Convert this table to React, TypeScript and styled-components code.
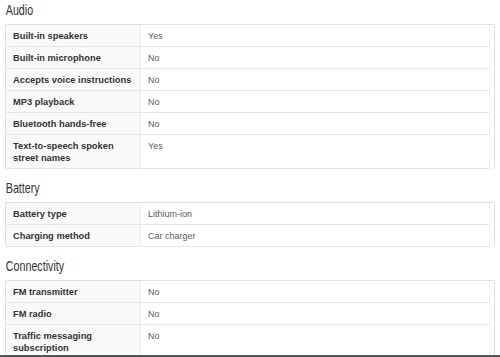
import styled, {createGlobalStyle} from "styled-components";

const GlobalStyle = createGlobalStyle`
  body {
    margin: 0;
    background: #ffffff;
    font-family: "Liberation Sans", Arial, sans-serif;
  }
`;

const Page = styled.div`
  height: 357px;
  box-sizing: border-box;
  overflow: hidden;
  padding: 0 5px;
  border-bottom: 2px solid #555555;
`;

const Section = styled.section`
  & + & {
    margin-top: 9px;
  }
`;

const Heading = styled.h2`
  margin: 0 0 4px;
  padding-left: 1px;
  height: 20px;
  font-family: "Liberation Sans", Arial, sans-serif;
  font-weight: normal;
  font-size: 14.5px;
  line-height: 20px;
  color: #333333;
  transform: scaleX(0.74);
  transform-origin: left center;
  white-space: nowrap;
`;

const Panel = styled.div`
  border: 1px solid #dedede;
  border-bottom: none;
  padding-right: 4px;
  border-radius: 2px;
`;

const Table = styled.table`
  width: 100%;
  border-collapse: collapse;
  border-right: 1px solid #f0f0f0;
`;

const Row = styled.tr`
  border-bottom: 1px solid #e6e6e6;
`;

const Label = styled.th`
  width: 120px;
  padding: 5px 7px 4px;
  background: #f9f9f9;
  border-right: 1px solid #ececec;
  text-align: left;
  vertical-align: top;
  font-size: 9.3px;
  line-height: 12px;
  font-weight: bold;
  color: #333333;
`;

const Value = styled.td`
  padding: 5px 7px 4px;
  vertical-align: top;
  font-size: 9px;
  line-height: 12px;
  color: #5a5a5a;
`;

type Spec = [string, string];

const sections: {title: string; specs: Spec[]}[] = [
  {
    title: "Audio",
    specs: [
      ["Built-in speakers", "Yes"],
      ["Built-in microphone", "No"],
      ["Accepts voice instructions", "No"],
      ["MP3 playback", "No"],
      ["Bluetooth hands-free", "No"],
      ["Text-to-speech spoken street names", "Yes"],
    ],
  },
  {
    title: "Battery",
    specs: [
      ["Battery type", "Lithium-ion"],
      ["Charging method", "Car charger"],
    ],
  },
  {
    title: "Connectivity",
    specs: [
      ["FM transmitter", "No"],
      ["FM radio", "No"],
      ["Traffic messaging subscription", "No"],
    ],
  },
];

const App = () => (
  <>
    <GlobalStyle />
    <Page>
      {sections.map((s) => (
        <Section key={s.title}>
          <Heading>{s.title}</Heading>
          <Panel>
            <Table>
              <tbody>
                {s.specs.map(([label, value]) => (
                  <Row key={label}>
                    <Label>{label}</Label>
                    <Value>{value}</Value>
                  </Row>
                ))}
              </tbody>
            </Table>
          </Panel>
        </Section>
      ))}
    </Page>
  </>
);

export default App;
